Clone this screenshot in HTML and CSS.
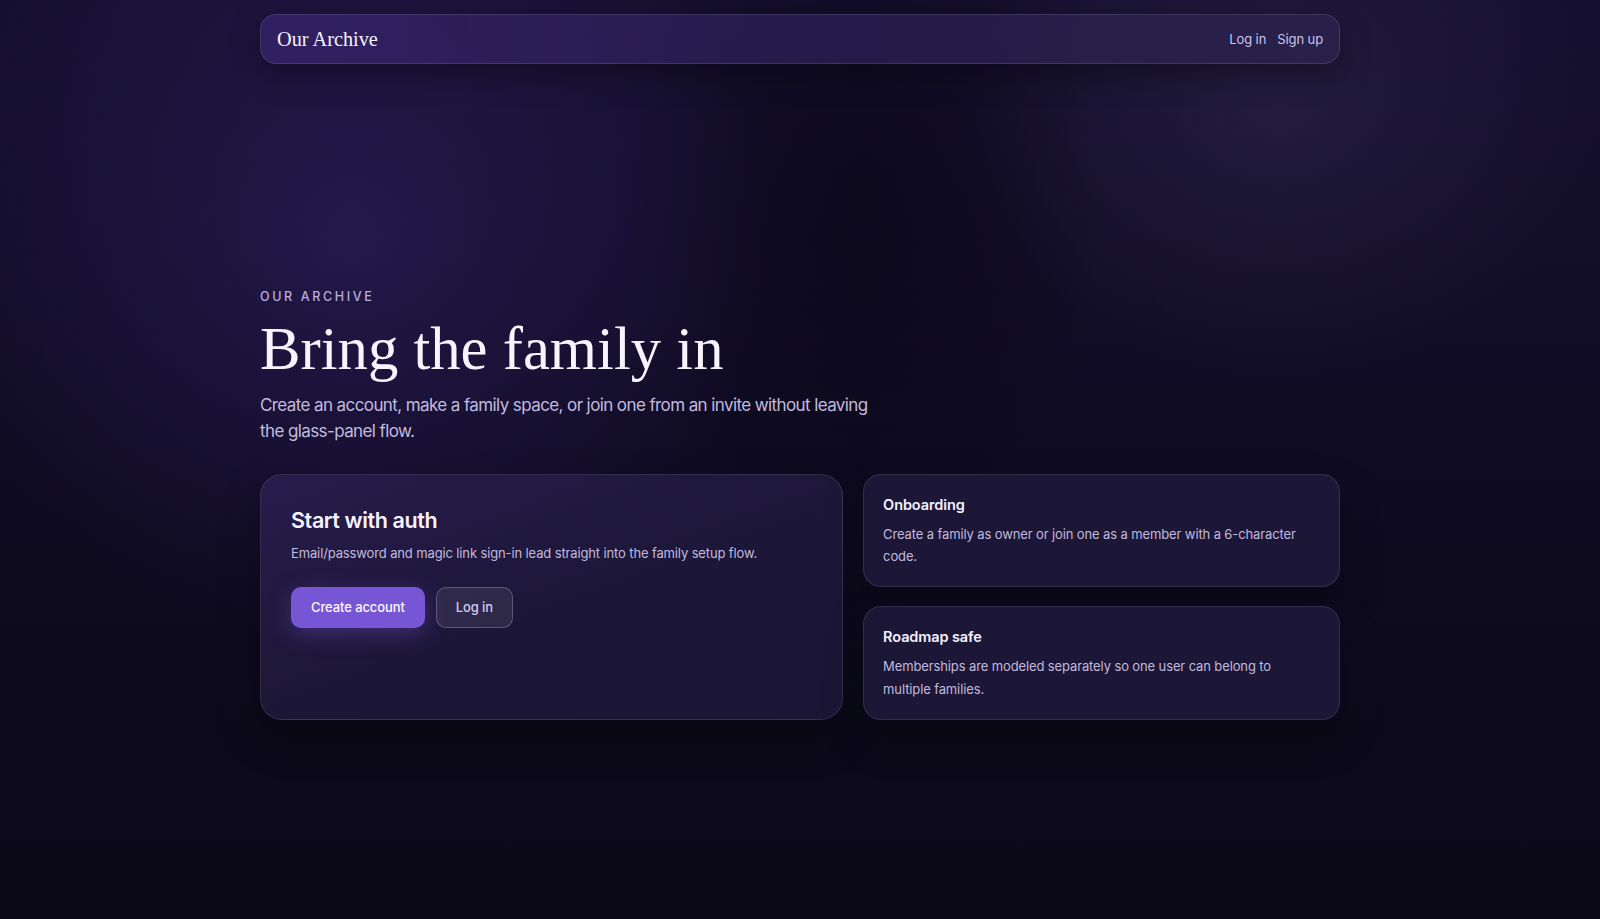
FILE: index.html
```html
<!DOCTYPE html>
<html lang="en">
<head>
<meta charset="utf-8">
<title>Our Archive</title>
<link rel="stylesheet" href="styles.css">
</head>
<body>
<div class="page">
  <header class="nav">
    <div class="brand">Our Archive</div>
    <nav class="nav-links">
      <a href="#" class="nav-link">Log in</a>
      <a href="#" class="nav-link">Sign up</a>
    </nav>
  </header>

  <main class="hero">
    <p class="eyebrow">OUR ARCHIVE</p>
    <h1 class="title">Bring the family in</h1>
    <p class="lead">Create an account, make a family space, or join one from an invite without leaving the glass-panel flow.</p>

    <section class="grid">
      <div class="card card-main">
        <h2 class="card-title">Start with auth</h2>
        <p class="card-text">Email/password and magic link sign-in lead straight into the family setup flow.</p>
        <div class="actions">
          <a href="#" class="btn btn-primary">Create account</a>
          <a href="#" class="btn btn-ghost">Log in</a>
        </div>
      </div>
      <div class="side">
        <div class="card card-small">
          <h3 class="small-title">Onboarding</h3>
          <p class="small-text">Create a family as owner or join one as a member with a 6-character code.</p>
        </div>
        <div class="card card-small">
          <h3 class="small-title">Roadmap safe</h3>
          <p class="small-text">Memberships are modeled separately so one user can belong to multiple families.</p>
        </div>
      </div>
    </section>
  </main>
</div>
</body>
</html>
```

FILE: styles.css
```css
* { box-sizing: border-box; }

html, body {
  margin: 0;
  padding: 0;
}

body {
  min-height: 100vh;
  font-family: Inter, "Noto Sans", sans-serif;
  color: #f3f0ff;
  background:
    radial-gradient(ellipse 560px 540px at 22% 26%, rgba(72, 46, 145, 0.32), rgba(72, 46, 145, 0) 75%),
    radial-gradient(ellipse 420px 360px at 80% 12%, rgba(110, 95, 150, 0.16), rgba(110, 95, 150, 0) 75%),
    radial-gradient(ellipse 300px 500px at 54% 22%, rgba(5, 3, 12, 0.45), rgba(5, 3, 12, 0) 80%),
    linear-gradient(180deg, #161030 0%, #100c24 45%, #0c0a1a 80%, #0b0918 100%);
}

a { text-decoration: none; color: inherit; }

.page {
  max-width: 1080px;
  margin: 0 auto;
  padding: 14px 0 40px;
}

.nav {
  height: 50px;
  display: flex;
  align-items: center;
  justify-content: space-between;
  padding: 0 16px;
  border-radius: 16px;
  border: 1px solid rgba(255, 255, 255, 0.11);
  background: linear-gradient(90deg, rgba(52, 34, 104, 0.85) 0%, rgba(46, 32, 90, 0.75) 40%, rgba(44, 36, 78, 0.7) 100%);
  box-shadow: 0 10px 30px rgba(0, 0, 0, 0.35);
}

.brand {
  font-family: "Liberation Serif", "DejaVu Serif", serif;
  font-size: 20.3px;
  color: #f6f2ff;
}

.nav-links {
  display: flex;
  gap: 11px;
}

.nav-link {
  font-size: 13px;
  letter-spacing: -0.1px;
  color: #cdc3ee;
}

.hero {
  padding-top: 225px;
}

.eyebrow {
  margin: 0;
  font-size: 12.5px;
  letter-spacing: 0.21em;
  color: #b8addd;
  font-weight: 500;
}

.title {
  margin: 11px 0 0;
  font-family: "Liberation Serif", "DejaVu Serif", serif;
  font-weight: 400;
  font-size: 60.7px;
  line-height: 1.13;
  color: #f7f4ff;
}

.lead {
  margin: 8px 0 0;
  max-width: 622px;
  font-size: 17px;
  line-height: 26.5px;
  letter-spacing: -0.6px;
  color: #c3badf;
}

.grid {
  margin-top: 29px;
  display: grid;
  grid-template-columns: 582fr 476fr;
  gap: 20px;
}

.card {
  border: 1px solid rgba(255, 255, 255, 0.1);
  background: rgba(32, 25, 62, 0.82);
  box-shadow: 0 18px 40px rgba(0, 0, 0, 0.28);
}

.card-main {
  border-radius: 22px;
  padding: 32px 30px;
  min-height: 246px;
  background: linear-gradient(160deg, rgba(42, 30, 80, 0.9) 0%, rgba(30, 24, 58, 0.9) 55%, rgba(29, 23, 56, 0.9) 100%);
}

.card-title {
  margin: 0;
  font-size: 21.5px;
  font-weight: 600;
  letter-spacing: -0.4px;
  color: #f6f3ff;
}

.card-text {
  margin: 10px 0 0;
  font-size: 13px;
  line-height: 20px;
  letter-spacing: -0.13px;
  color: #c2b9de;
}

.actions {
  margin-top: 24px;
  display: flex;
  gap: 11px;
}

.btn {
  display: inline-flex;
  align-items: center;
  justify-content: center;
  height: 41px;
  padding: 0 20px;
  border-radius: 10px;
  font-size: 13px;
  letter-spacing: -0.1px;
  font-weight: 500;
}

.btn-primary {
  background: #7756d6;
  color: #fbf9ff;
  box-shadow: 0 6px 22px rgba(120, 86, 220, 0.35);
}

.btn-ghost {
  padding: 0 19px;
  color: #d4cbf0;
  background: rgba(255, 255, 255, 0.08);
  border: 1px solid rgba(255, 255, 255, 0.22);
}

.side {
  display: flex;
  flex-direction: column;
  gap: 19px;
}

.card-small {
  flex: 1;
  border-radius: 18px;
  padding: 21px 19px 16px;
  background: rgba(30, 24, 58, 0.9);
}

.small-title {
  margin: 0;
  font-size: 14.5px;
  font-weight: 600;
  letter-spacing: -0.1px;
  color: #f4f1ff;
}

.small-text {
  margin: 10px 0 0;
  font-size: 13px;
  line-height: 22.5px;
  letter-spacing: -0.12px;
  color: #c2b9de;
}
```
